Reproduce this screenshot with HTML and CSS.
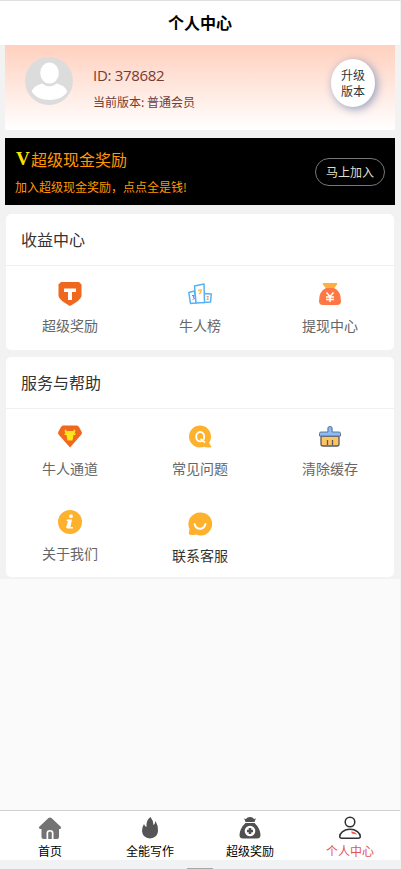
FILE: index.html
```html
<!DOCTYPE html>
<html lang="zh-CN">
<head>
<meta charset="utf-8">
<title>个人中心</title>
<link rel="stylesheet" href="styles.css">
</head>
<body>
<div class="app">
  <header class="header">个人中心</header>
  <main class="content">
    <section class="profile">
      <svg class="avatar" viewBox="0 0 48 48"><circle cx="24" cy="24" r="24" fill="#dcdcdc"/><ellipse cx="24.500" cy="16" rx="9.300" ry="10.600" fill="#fff"/><path d="M7 35C7 31 12 28 17 26.500Q24.500 32 32 26.500C37 28 42 31 42 35C39 40 32 43 24.500 43S10 40 7 35Z" fill="#fff"/></svg>
      <div class="identity">
        <div class="user-id">ID: 378682</div>
        <div class="version">当前版本: 普通会员</div>
      </div>
      <div class="upgrade">升级<br>版本</div>
    </section>
    <section class="promo">
      <div>
        <div class="promo-title"><b class="vip">V</b>超级现金奖励</div>
        <div class="promo-text">加入超级现金奖励，点点全是钱!</div>
      </div>
      <div class="join">马上加入</div>
    </section>
    <section class="card income">
      <h2 class="card-title">收益中心</h2>
      <div class="grid">
        <div class="item"><svg class="icon" viewBox="0 0 24 24"><path d="M3 0H21L23.500 2.500V14Q23 18 12 24Q1 18 .5 14V2.500Z" fill="#f0681d"/><path d="M6 6.500H18V10H14V18H10V10H6Z" fill="#fff"/></svg><span>超级奖励</span></div>
        <div class="item"><svg class="icon" viewBox="0 0 24 24"><g fill="#fff" stroke="#55b2f5" stroke-width="1.500" stroke-linejoin="round"><path d="M.8 10.500L6.500 9L8 21L2.500 21.500Z"/><path d="M15.500 11.500L23.300 12L22.500 20L15 20.500Z"/><path d="M6.500 4L16 2L16.500 20.500L8 21Z"/></g><path d="M10 8.500L13 8L12.500 10.500L11 12" fill="none" stroke="#f6c64e" stroke-width="1.600"/><path d="M4 13.500L6 13.500L5 15L6.500 16.500L4.500 17.500" fill="none" stroke="#8b78e4"/><path d="M18.500 14.500L20.500 14.500L19.500 16L20.500 17.500L18.500 17.500" fill="none" stroke="#f3a067"/></svg><span>牛人榜</span></div>
        <div class="item"><svg class="icon" viewBox="0 0 24 24"><path d="M5.500 1H18.500Q20 1 19 2.500L16 6.500H8L5 2.500Q4 1 5.500 1Z" fill="#ffae42"/><path d="M8 6H16Q23 9 23 19Q23 23 19 23H5Q1 23 1 19Q1 9 8 6Z" fill="#ff7844"/><path d="M8.500 10.500L12 14.500L15.500 10.500M8 15H16M8 17.500H16M12 14.500V20" fill="none" stroke="#fff" stroke-width="1.500"/></svg><span>提现中心</span></div>
      </div>
    </section>
    <section class="card help">
      <h2 class="card-title">服务与帮助</h2>
      <div class="grid">
        <div class="item"><svg class="icon" viewBox="0 0 24 24"><path d="M5 .5H19Q20 .5 21 2L23.500 6.500Q24.500 8.500 23 10L12 22.500L1 10Q-.5 8.500 .5 6.500L3 2Q4 .5 5 .5Z" fill="#f0681d"/><path d="M8 4L8.500 6H15.500L16 4L17.500 6L16.500 8.500H17.500V10H15.500L14.500 15.500H9.500L8.500 10H6.500V8.500H7.500L6.500 6Z" fill="#fce41f"/></svg><span>牛人通道</span></div>
        <div class="item"><svg class="icon" viewBox="0 0 24 24"><path d="M12 .5A11 11 0 1 1 12 22.500A11 11 0 0 1 12 .5M20 16L23.500 22Q19 23.500 15 21Z" fill="#fdb12c"/><ellipse cx="12.200" cy="11.700" rx="4" ry="4.700" fill="none" stroke="#fff" stroke-width="1.900"/><path d="M12.500 14L17 17.500" stroke="#fff" stroke-width="1.800"/></svg><span>常见问题</span></div>
        <div class="item"><svg class="icon" viewBox="0 0 24 24"><path d="M3 11H21V19Q21 21 19 21H5Q3 21 3 19Z" fill="#fec462" stroke="#555b61" stroke-width="1.300"/><path d="M9.500 7V3Q9.500 1.500 12 1.500T14.500 3V7H21Q22.500 7 22.500 8.500V11H1.500V8.500Q1.500 7 3 7Z" fill="#8bbcf9"/><path d="M10 7V3Q10 1.500 12 1.500T14 3V7M10 7H3Q1.500 7 1.500 8.500V11H22.500V8.500Q22.500 7 21 7H14" fill="none" stroke="#596c83" stroke-width=".9"/><path d="M9.500 15V20M14.500 15V20" stroke="#555b61" stroke-width="1.300"/></svg><span>清除缓存</span></div>
        <div class="item"><svg class="icon" viewBox="0 0 24 24"><circle cx="12" cy="12" r="12" fill="#fdb12c"/><circle cx="13" cy="6.200" r="1.900" fill="#fff"/><path d="M9 9.500H14L12.500 17H15V18.500H9.500L8 17.500L10 11H8.500Z" fill="#fff"/></svg><span>关于我们</span></div>
        <div class="item service"><svg class="icon" viewBox="0 0 24 24"><path d="M12 .5A11.500 11.500 0 1 1 8 22.500Q5 23.500 1.500 22.500Q.5 22 1 20L1.500 17A11.500 11.500 0 0 1 12 .5Z" fill="#fdb12c"/><path d="M6.500 12Q8 16.800 12 16.800T17.500 12" fill="none" stroke="#fff" stroke-width="2" stroke-linecap="round"/></svg><span>联系客服</span></div>
      </div>
    </section>
  </main>
  <nav class="tabs">
    <div class="tab"><svg class="tab-icon" viewBox="0 0 24 24"><path d="M1 11L10.500 2Q12 1 13.500 2L23 11Q23.500 13 21 13V21Q21 23 19 23H15.500V17Q15.500 14 12 14T8.500 17V23H5.500Q3.500 23 3.500 21V13Q.5 13 1 11Z" fill="#737373"/><path d="M10.200 23V17Q10.200 15.500 12 15.500T13.800 17V23Z" fill="#737373"/></svg><span>首页</span></div>
    <div class="tab"><svg class="tab-icon" viewBox="0 0 24 24"><path d="M12.500 1Q15 4 15.500 9Q17 8 17.500 5Q20.500 10 20 15Q19.500 22 12 22.500Q4.500 22 4 15Q4 11 6 8Q7 11 8.500 11Q8 4 12.500 1Z" fill="#555"/></svg><span>全能写作</span></div>
    <div class="tab"><svg class="tab-icon" viewBox="0 0 24 24"><path d="M6 2Q8 4 9.500 1.500Q12 .5 14.500 1.500Q16 4 18 2L16.500 6H7.500Z" fill="#505050"/><path d="M7.500 7H16.500Q22 12 22.500 19Q22.500 22.500 19 22.500H5Q1.500 22.500 1.500 19Q2 12 7.500 7Z" fill="#505050"/><circle cx="12" cy="15" r="5.300" fill="#fff"/><path d="M12 12V18M9 15H15" stroke="#505050" stroke-width="2.600"/></svg><span>超级奖励</span></div>
    <div class="tab active"><svg class="tab-icon" viewBox="0 0 24 24"><circle cx="12" cy="6" r="4.800" fill="#fff" stroke="#303030" stroke-width="1.500"/><path d="M12 13.200C18 13.200 22.300 17 22.300 20.500Q22.300 22.200 20 22.200H4Q1.700 22.200 1.700 20.500C1.700 17 6 13.200 12 13.200Z" fill="#fff" stroke="#303030" stroke-width="1.500"/><path d="M13 15.500Q17 15.500 19 18.500L14 17.500Z" fill="#ef5549"/></svg><span>个人中心</span></div>
  </nav>
  <div class="handle"></div>
</div>
</body>
</html>
```
FILE: styles.css
```css
* { box-sizing: border-box; }
body { margin: 0; background: #f1f2f4; font-family: "Noto Sans CJK SC", sans-serif; color: #333; }
.app { height: 869px; display: flex; flex-direction: column; border-top: 1px solid #e0e0e0; border-right: 1px solid #f2f2f2; background: #fafafa; overflow: hidden; }
.header { height: 44px; line-height: 43px; flex: none; background: #fff; color: #000; font-size: 16px; font-weight: 700; text-align: center; }
.content { height: 534px; flex: none; padding: 0 5px; background: #f2f2f2; }
.profile { height: 85px; display: flex; padding: 12px 20px 0; background: linear-gradient(#ffd0be, #fff); color: #733c35; }
.avatar { width: 48px; height: 48px; }
.identity { flex: 1; padding: 7px 0 0 20px; }
.user-id { font: 15px/22px "Open Sans", sans-serif; letter-spacing: -.3px; }
.version { margin-top: 7px; font-size: 12px; line-height: 18px; }
.upgrade { width: 44px; height: 48px; margin-top: 2px; padding-top: 8px; border-radius: 50%; background: #fff; box-shadow: 2px 2px 10px #8f9bbb; color: #333; font-size: 12px; line-height: 16px; text-align: center; }
.promo { height: 67px; margin-top: 8px; padding: 0 10px; display: flex; justify-content: space-between; align-items: center; background: #000; color: #ff9800; }
.promo-title { display: flex; align-items: center; font-size: 16px; line-height: 24px; }
.vip { width: 16px; padding-left: 1px; color: #ffe000; font-family: "Liberation Serif", serif; font-size: 19px; line-height: 24px; }
.promo-text { margin-top: 7px; font-size: 12px; line-height: 18px; }
.join { width: 70px; height: 28px; border: 1px solid #777; border-radius: 14px; color: #e0dfc8; font-size: 12px; line-height: 26px; text-align: center; }
.card { margin: 0 1px; border-radius: 5px; background: #fff; }
.income { height: 136px; margin-top: 9px; }
.help { height: 220px; margin-top: 7px; }
.card-title { height: 52px; margin: 0; padding-left: 15px; border-bottom: 1px solid #f0f0f2; font-size: 16px; font-weight: 400; line-height: 51px; }
.grid { display: grid; grid-template-columns: repeat(3, 130px); grid-auto-rows: 85px; margin: 0 -1px; }
.item { display: flex; flex-direction: column; align-items: center; padding-top: 16px; color: #666; font-size: 14px; line-height: 20px; }
.item span { margin-top: 9px; }
.icon { width: 24px; height: 24px; }
.service { padding-top: 18px; color: #333; }
.tabs { height: 50px; flex: none; margin-top: auto; display: grid; grid-template-columns: repeat(4, 1fr); border-top: 1px solid #d0d0d0; background: #fff; }
.tab { display: flex; flex-direction: column; align-items: center; padding-top: 5px; color: #000; font-size: 12px; line-height: 18px; }
.tab span { margin-top: 2px; }
.tab-icon { width: 24px; height: 24px; }
.active { color: #e25555; }
.handle { height: 9px; flex: none; background: linear-gradient(#a8a8a8, #a8a8a8) 187px 8px / 26px 1px no-repeat #f1f2f4; }
```
